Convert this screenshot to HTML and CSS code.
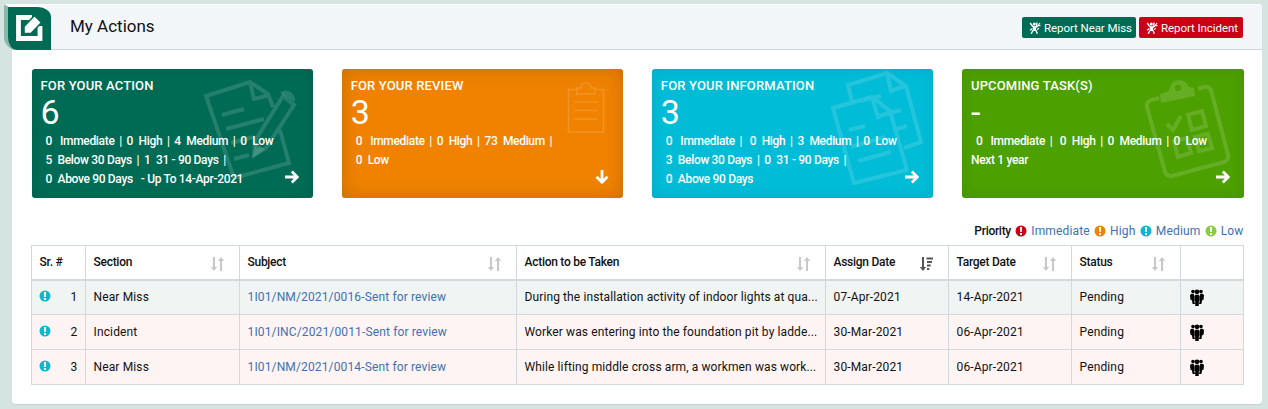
FILE: index.html
```html
<!DOCTYPE html>
<html lang="en">
<head>
<meta charset="utf-8">
<title>My Actions</title>
<link rel="stylesheet" href="styles.css">
</head>
<body>
<svg class="defs" width="0" height="0" aria-hidden="true">
  <symbol id="person" viewBox="0 0 12 12"><g fill="none" stroke="currentColor"><path d="M1.200 1 3.500 4.200 6 5.500 7.500 4.500 8 .5M4 8.300 2.200 11.800M7 8.300 8.300 11.800M1 8.300 3.500 6.500" stroke-width="1.400"/><path d="M5.300 4.500 5.700 9" stroke-width="3"/><path d="M7.500 5.500 11 1M8 7.500 10 6.200M9.500 4 11.500 3.200" stroke-width="1.200"/></g><circle cx="5.300" cy="2" r="1.500" fill="currentColor"/></symbol>
  <symbol id="alert" viewBox="0 0 12 12"><circle cx="6" cy="6" r="5.500" fill="currentColor"/><path d="M4.900 2h2.200l-.3 5H5.200zM5 8h2v2H5z" fill="#fff"/></symbol>
  <symbol id="sort" viewBox="0 0 13 14"><path d="M2 0h2v10h2.200L3 14-.2 10H2zM9 14h2V4h2.200L10 0 6.800 4H9z" fill="currentColor"/></symbol>
  <symbol id="sort-desc" viewBox="0 0 13 14"><path d="M2 0h2v10h2.200L3 14-.2 10H2zM6.500.5H13v2H6.500zM7 4h5v2H7zM7 7.500h3.700v2H7zM7 11h2.300v2H7z" fill="currentColor"/></symbol>
  <symbol id="group" viewBox="0 0 14 17"><g fill="currentColor"><circle cx="3" cy="2.500" r="1.800"/><circle cx="11" cy="2.500" r="1.800"/><circle cx="7" cy="2.800" r="2.400"/><path d="M1.500 4.800h2.300L4 7v4l1 4H2.600L2 11.500.4 10.500 0 6zM12.500 4.800h-2.300L10 7v4l-1 4h2.400l.6-3.500 1.600-1 .4-4.500z"/><path d="M5.300 5.800h3.400l1 1.300v4.700l-.8.300L8.700 17H5.300l-.2-4.900-.8-.3V7.100z"/></g></symbol>
  <symbol id="arrow" viewBox="0 0 14 14"><path d="M0 7h12M6.800 1.500 12.300 7l-5.500 5.500" fill="none" stroke="currentColor" stroke-width="2.800"/></symbol>
</svg>
<main class="panel">
  <header class="head">
    <div class="badge"><svg width="27" height="26" viewBox="0 0 27 26"><path d="M16 2.500H2.500v21h21.500V11" fill="none" stroke="#fff" stroke-width="4.800"/><path d="M8 18.500v-7L18.500.5l7 7L15 18.500z" fill="#fff" stroke="#006b54" stroke-width="1.600"/></svg></div>
    <h1 class="title">My Actions</h1>
    <a class="btn btn-miss"><svg width="12" height="12"><use href="#person"/></svg>Report Near Miss</a>
    <a class="btn btn-incident"><svg width="12" height="12"><use href="#person"/></svg>Report Incident</a>
  </header>
  <section class="cards">
    <article class="card green">
      <svg class="art" viewBox="0 0 282 129"><path fill="none" stroke="#fff" stroke-width="4" d="m241 38-5-13-18-12-44 14 28 82 55-15-9-33M218 13l4 17 16-4M190 46l22-6M194 60l38-10M199 74l22-6M202 90l15-4M251 27l11 9-28 43-12 7 1-14zM222 84l7-5"/></svg>
      <svg class="art" viewBox="0 0 282 129"><path d="M248 24c5-6 16-1 15 9zM223 74l10 6-12 9z" fill="#fff"/></svg>
      <h2>FOR YOUR ACTION</h2><div class="num">6</div>
      <p><b class="wide">0</b>Immediate<i>|</i><b>0</b>High<i>|</i><b>4</b>Medium<i>|</i><b>0</b>Low</p>
      <p><b>5</b>Below 30 Days<i>|</i><b>1</b>31 - 90 Days<i>|</i></p>
      <p><b>0</b>Above 90 Days<span class="until">- Up To 14-Apr-2021</span></p>
      <svg class="go" width="14" height="14"><use href="#arrow"/></svg>
    </article>
    <article class="card orange">
      <svg class="art" viewBox="0 0 282 129"><g fill="none" stroke="#fff" stroke-width="1.600"><path d="M235 20.500h-8.500v42.500h35V20.500H253M232 33h24M232 41.500h24M232 50h24"/><path d="M235 25v-6h4c0-7 10-7 10 0h4v6z"/></g></svg>
      <h2>FOR YOUR REVIEW</h2><div class="num">3</div>
      <p><b class="wide">0</b>Immediate<i>|</i><b>0</b>High<i>|</i><b>73</b>Medium<i>|</i></p>
      <p><b>0</b>Low</p>
      <svg class="go down" width="14" height="14"><use href="#arrow"/></svg>
    </article>
    <article class="card cyan">
      <svg class="art" viewBox="0 0 282 129"><path fill="none" stroke="#fff" stroke-width="4" d="m201 36-5-20 39-12 19 13 15 56-17 6M235 4l4 18 14-5M208 32l21-5M226 47l23-6M241 61l14-4M181 39l39-11 18 14 17 59-53 13zM220 28l6 20 13-5M197 61l16-4M199 78l34-10M206 92l33-9"/></svg>
      <h2>FOR YOUR INFORMATION</h2><div class="num">3</div>
      <p><b class="wide">0</b>Immediate<i class="after">|</i><b>0</b>High<i>|</i><b>3</b>Medium<i>|</i><b>0</b>Low</p>
      <p><b>3</b>Below 30 Days<i>|</i><b>0</b>31 - 90 Days<i>|</i></p>
      <p><b>0</b>Above 90 Days</p>
      <svg class="go" width="14" height="14"><use href="#arrow"/></svg>
    </article>
    <article class="card lime">
      <svg class="art" viewBox="0 0 282 129"><path fill="none" stroke="#fff" stroke-width="4" d="m197 29-8 2q-5 2-4 7l18 65q2 5 7 4l52-14q5-2 4-7l-17-65q-2-4-7-3l-6 2M205 55l6 6 8-14M226 46l14-4 4 15-14 4zM212 72l13-3 4 15-13 4zM233 68l13-3 4 14-13 3z"/><path fill="#fff" fill-rule="evenodd" d="m199 34-1-9 9-3c0-12 16-15 20-4l5 1 1 8zM213 20a3 3 0 1 0 6-2 3 3 0 0 0-6 2z"/></svg>
      <h2>UPCOMING TASK(S)</h2><div class="num dash">-</div>
      <p><b class="wide">0</b>Immediate<i class="after">|</i><b>0</b>High<i>|</i><b>0</b>Medium<i>|</i><b>0</b>Low</p>
      <p class="next">Next 1 year</p>
      <svg class="go" width="14" height="14"><use href="#arrow"/></svg>
    </article>
  </section>
  <div class="legend"><strong>Priority</strong>
    <svg class="red"><use href="#alert"/></svg><a>Immediate</a>
    <svg class="amber"><use href="#alert"/></svg><a>High</a>
    <svg class="teal"><use href="#alert"/></svg><a>Medium</a>
    <svg class="leaf"><use href="#alert"/></svg><a>Low</a>
  </div>
  <table class="grid">
    <colgroup><col class="c1"><col class="c2"><col class="c3"><col class="c4"><col class="c5"><col class="c6"><col class="c7"><col class="c8"></colgroup>
    <thead><tr>
      <th>Sr. #</th>
      <th><div>Section<svg><use href="#sort"/></svg></div></th>
      <th><div>Subject<svg><use href="#sort"/></svg></div></th>
      <th><div>Action to be Taken<svg><use href="#sort"/></svg></div></th>
      <th><div>Assign Date<svg class="active"><use href="#sort-desc"/></svg></div></th>
      <th><div>Target Date<svg><use href="#sort"/></svg></div></th>
      <th><div>Status<svg><use href="#sort"/></svg></div></th>
      <th></th>
    </tr></thead>
    <tbody>
      <tr class="near"><td><div class="sr"><svg class="teal"><use href="#alert"/></svg>1</div></td><td>Near Miss</td><td><a class="subj">1I01/NM/2021/0016-Sent for review</a></td><td class="act">During the installation activity of indoor lights at qua...</td><td>07-Apr-2021</td><td>14-Apr-2021</td><td>Pending</td><td><svg class="group"><use href="#group"/></svg></td></tr>
      <tr class="late"><td><div class="sr"><svg class="teal"><use href="#alert"/></svg>2</div></td><td>Incident</td><td><a class="subj">1I01/INC/2021/0011-Sent for review</a></td><td class="act">Worker was entering into the foundation pit by ladde...</td><td>30-Mar-2021</td><td>06-Apr-2021</td><td>Pending</td><td><svg class="group"><use href="#group"/></svg></td></tr>
      <tr class="late"><td><div class="sr"><svg class="teal"><use href="#alert"/></svg>3</div></td><td>Near Miss</td><td><a class="subj">1I01/NM/2021/0014-Sent for review</a></td><td class="act">While lifting middle cross arm, a workmen was work...</td><td>30-Mar-2021</td><td>06-Apr-2021</td><td>Pending</td><td><svg class="group"><use href="#group"/></svg></td></tr>
    </tbody>
  </table>
</main>
</body>
</html>
```
FILE: styles.css
```css
* { box-sizing: border-box; }
body { margin: 0; padding: 4px 6px 5px 12px; height: 409px; overflow: hidden; background: #d5e4e0; font: 12px/16px Roboto, "Liberation Sans", sans-serif; color: #111; }
svg { display: block; flex: none; }
.defs { position: absolute; }
.panel { height: 400px; background: #fff; border-radius: 4px; box-shadow: 0 1px 1px #c3d2cf; }
.head { height: 46px; display: flex; align-items: center; background: #f2f6f9; border-bottom: 1px solid #ced8de; border-top: 1px solid #fff; padding-right: 19px; border-radius: 4px 4px 0 0; }
.badge { width: 47px; height: 46px; margin: 0 0 0 -8px; border-top: 3px solid #fff; border-left: 4px solid #8cb8ac; border-radius: 3px 13px 0 13px; background: #006b54; display: flex; align-items: center; justify-content: center; flex: none; }
.badge svg { margin: -2px 0 0 -1px; }
.title { font-size: 17px; font-weight: 400; line-height: 20px; margin: -2px auto 0 19px; }
.btn { height: 21px; display: flex; align-items: center; gap: 3px; padding: 1px 0 0 7px; border-radius: 2px; color: #fff; font-size: 11.500px; letter-spacing: -.07px; margin-left: 3px; white-space: nowrap; }
.btn-miss { background: #006b54; width: 114px; }
.btn-incident { background: #c90016; width: 104px; }
.cards { display: grid; grid-template-columns: repeat(4, 1fr); gap: 28.700px; padding: 19px 18.500px 0 19.500px; }
.card { position: relative; height: 129px; border-radius: 3px; padding: 8px 9px; color: #fff; font-size: 12px; letter-spacing: -.33px; font-weight: 500; box-shadow: inset 0 0 14px rgba(0,0,0,.09); }
.green { background: #006b54; }
.orange { background: #f08200; box-shadow: inset 0 0 18px rgba(0,0,0,.17); }
.cyan { background: #00bcd7; }
.lime { background: #4ca000; }
.art { position: absolute; left: 0; top: 0; width: 282px; height: 129px; opacity: .14; }
.card h2 { margin: 0; font-size: 13px; line-height: 17px; font-weight: 500; letter-spacing: .15px; }
.num { font-size: 34px; line-height: 36px; font-weight: 400; margin-bottom: 2px; height: 36px; letter-spacing: 0; }
.card p { margin: 0; padding-left: 5px; line-height: 19px; white-space: nowrap; }
.card p.next { padding-left: 0; }
.card b { font-weight: 500; margin-right: 5.500px; }
.card b.wide { margin-right: 8px; }
.card i { font-style: normal; margin: 0 4.700px; }
.card i.after { margin-right: 7.500px; }
.until { margin-left: 8px; }
.go { position: absolute; right: 14px; bottom: 14px; }
.down { transform: rotate(90deg); }
.legend { display: flex; justify-content: flex-end; align-items: center; padding: 18px 18.500px 0 0; height: 47px; gap: 4.200px; letter-spacing: .14px; }
.legend strong { font-size: 12px; font-weight: 500; letter-spacing: -.3px; }
.legend svg, .sr svg { width: 12px; height: 12px; }
.sr svg { margin: 1px 0 0 -1px; }
.legend a, .subj { color: #4070b5; }
.red { color: #c90016; }
.amber { color: #f08200; }
.teal { color: #0bb8d2; }
.leaf { color: #88cc44; }
.grid { margin: 0 0 0 19px; width: 1213px; table-layout: fixed; border-collapse: collapse; }
.c1 { width: 54px; } .c2 { width: 154px; } .c3 { width: 277px; } .c4 { width: 309px; }
.c5 { width: 123px; } .c6 { width: 123px; } .c7 { width: 109px; } .c8 { width: 63px; }
.grid th, .grid td { border: 1px solid #d1d9dc; padding: 0 7.500px; text-align: left; white-space: nowrap; }
.grid th { height: 34px; border-bottom-width: 2px; font-size: 12px; font-weight: 500; letter-spacing: -.27px; }
.grid th div { display: flex; justify-content: space-between; }
.grid th svg { width: 13px; height: 14px; color: #c8c8c8; margin: 3px 8px -3px 0; }
.grid th svg.active { color: #555; }
.grid td { height: 35px; letter-spacing: .14px; }
.grid td.act { letter-spacing: .11px; }
.near { background: #f0f4f3; }
.late { background: #fff4f4; }
.sr { display: flex; justify-content: space-between; }
.group { width: 14px; height: 17px; color: #000; margin: 0 0 0 1px; }
```
